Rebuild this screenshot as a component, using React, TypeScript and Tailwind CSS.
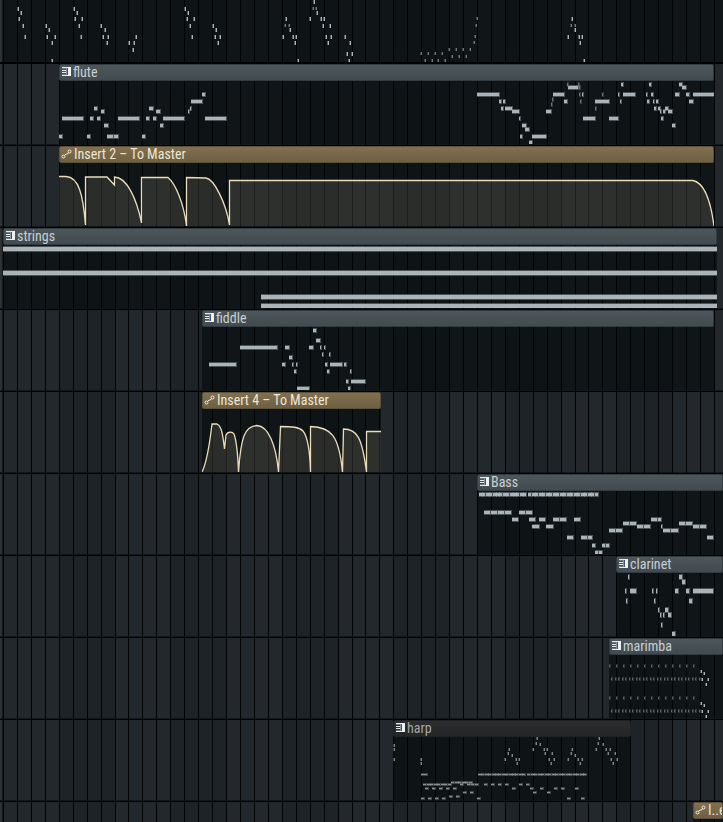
import type { ReactNode } from "react";

type Note = [x: number, y: number, w: number];
type Dot = [x: number, y: number];

// One beat is a bit under 14px, lines snap to whole pixels
const beatX = (i: number) => 3 + Math.round(i * 13.94);
const beats = Array.from({ length: 240 }, (_, i) => i);

const range = (count: number, start: number, step: number) =>
  Array.from({ length: count }, (_, i) => Math.round(start + i * step));

const dots = (points: Dot[]): Note[] => points.map(([x, y]) => [x - 1, y - 2, 2]);

const leadDots: Dot[] = [
  [18, 9], [21, 13], [19, 19], [23, 26], [25, 37],
  [46, 26], [49, 30], [47, 37], [55, 37], [52, 43], [52, 61],
  [74, 9], [77, 13], [75, 19], [82, 19], [79, 26], [81, 37],
  [101, 26], [105, 30], [103, 37], [108, 37], [107, 43],
  [129, 43], [134, 43], [136, 37], [133, 50],
  [185, 9], [188, 13], [187, 19], [194, 19], [190, 26], [192, 37],
  [213, 26], [216, 30], [215, 37], [220, 37], [218, 43],
  [283, 37], [286, 19], [290, 30], [293, 37], [296, 37], [295, 43], [298, 61],
  [310, 19], [314, 2], [317, 13], [321, 19], [324, 19], [323, 26], [330, 26],
  [326, 37], [331, 37], [328, 43],
  [345, 37], [350, 43], [347, 54], [352, 54], [349, 61],
  [568, 37], [572, 19], [575, 30], [579, 37], [582, 37], [580, 43], [584, 61],
];

const leadSoft: Dot[] = [
  [285, 26], [289, 26], [313, 9], [316, 9], [571, 26], [575, 26],
  [421, 54], [425, 61], [428, 54], [432, 61], [435, 54], [438, 61], [442, 54], [445, 61],
  [449, 50], [452, 57], [456, 50], [459, 57], [463, 50], [466, 57], [470, 50],
  [474, 43], [475, 37], [476, 26], [477, 19],
];

const fluteNotes: Note[] = [
  [59, 54, 3], [62, 36, 21], [87, 54, 3], [90, 36, 3], [94, 26, 3], [97, 36, 3],
  [101, 29, 3], [104, 43, 4], [107, 54, 6], [114, 54, 4], [118, 36, 21], [142, 54, 3],
  [146, 36, 3], [149, 26, 4], [153, 36, 3], [156, 29, 4], [160, 43, 3], [163, 36, 21],
  [188, 29, 1], [190, 26, 1], [191, 19, 11], [202, 12, 3], [205, 36, 21],
  [477, 12, 22], [499, 19, 2], [503, 19, 2], [501, 26, 2], [505, 26, 7], [512, 29, 7],
  [519, 36, 1], [522, 43, 4], [525, 47, 4], [520, 54, 2], [532, 54, 14], [529, 60, 3],
  [546, 29, 5], [553, 12, 11], [564, 19, 3], [568, 5, 10], [582, 12, 1], [583, 36, 12],
  [595, 19, 14], [609, 36, 9], [618, 12, 1], [620, 19, 1], [621, 2, 2], [623, 12, 12],
  [646, 12, 1], [647, 19, 2], [649, 2, 2], [651, 12, 2], [653, 19, 1], [656, 19, 2],
  [654, 26, 2], [658, 26, 2], [660, 29, 1], [663, 29, 2], [665, 26, 3], [668, 29, 4],
  [661, 36, 2], [672, 43, 3], [675, 12, 4], [679, 2, 3], [682, 5, 4], [686, 12, 3],
  [689, 19, 4], [693, 12, 21],
];

const fluteSoft: Note[] = [
  [551, 22, 1], [552, 17, 1], [567, 2, 1], [578, 2, 1], [579, 5, 1], [579, 12, 1],
  [580, 19, 1], [595, 26, 1], [602, 12, 1],
];

const stringNotes: Note[] = [
  [3, 2, 714], [3, 26, 714], [261, 50, 456], [261, 59, 456],
];

const fiddleNotes: Note[] = [
  [209, 36, 27], [240, 19, 37], [282, 36, 3], [285, 19, 4], [289, 29, 3], [292, 36, 1],
  [296, 36, 1], [294, 43, 2], [297, 60, 12], [309, 19, 4], [313, 2, 3], [316, 12, 4],
  [320, 19, 1], [324, 19, 1], [322, 26, 1], [329, 26, 1], [325, 36, 2], [327, 43, 2],
  [330, 36, 12], [344, 36, 2], [350, 43, 1], [346, 53, 2], [348, 60, 2], [351, 53, 14],
];

const bassNotes: Note[] = [
  ...range(14, 479, 3.4).map((x): Note => [x, 2, 3]),
  ...range(20, 528, 3.5).map((x): Note => [x, 2, 3]),
  [484, 20, 6], [491, 20, 6], [498, 20, 6], [505, 20, 6], [519, 20, 6], [526, 20, 6],
  [512, 27, 6], [529, 27, 6], [539, 27, 6], [553, 27, 6], [560, 27, 6], [574, 27, 6],
  [532, 34, 7], [546, 34, 7], [567, 45, 6], [581, 45, 6], [588, 45, 4], [592, 53, 3],
  [602, 53, 3], [606, 53, 3], [595, 60, 3], [599, 60, 3], [609, 38, 6], [616, 38, 6],
  [623, 31, 6], [630, 31, 6], [637, 34, 6], [644, 34, 6], [651, 27, 6], [658, 27, 3],
  [661, 34, 1], [663, 38, 7], [671, 38, 7], [679, 31, 6], [686, 31, 6], [693, 34, 6],
  [700, 34, 6], [707, 45, 6],
];

const clarinetNotes: Note[] = [
  [628, 2, 1], [625, 16, 1], [626, 26, 1], [630, 16, 6], [652, 16, 1], [656, 16, 1],
  [654, 26, 1], [658, 35, 1], [660, 40, 1], [661, 50, 1], [663, 40, 1], [665, 35, 3],
  [668, 40, 3], [672, 59, 3], [675, 16, 3], [679, 2, 3], [682, 7, 3], [686, 16, 3],
  [689, 26, 3], [693, 16, 20],
];

const marimbaSoft: Note[] = [11, 43].flatMap((y) => [
  ...range(13, 609, 7).map((x): Note => [x, y - 1, 1]),
  ...range(26, 611, 3.5).map((x): Note => [x, y + 12, 1]),
]);

const marimbaDots: Dot[] = [0, 32].flatMap((dy): Dot[] => [
  [701, 17 + dy], [704, 19 + dy], [702, 25 + dy], [708, 25 + dy], [706, 30 + dy],
]);

const harpDots: Dot[] = [
  [394, 9], [394, 13], [394, 23], [421, 23], [421, 27],
  [505, 23], [509, 13], [508, 17], [512, 19], [516, 23], [519, 23], [517, 27],
  [533, 13], [537, 2], [536, 7], [540, 8], [544, 13], [547, 13], [545, 17], [552, 17],
  [549, 23], [554, 23], [551, 27],
  [568, 23], [572, 13], [571, 17], [575, 19], [578, 23], [582, 23], [580, 27],
  [596, 13], [599, 2], [598, 7], [603, 8], [606, 13], [610, 13], [608, 17], [615, 17],
  [611, 23], [617, 23], [613, 27],
];

const harpNotes: Note[] = [
  [421, 37, 6],
  ...range(14, 478, 3.4).map((x): Note => [x, 37, 3]),
  ...range(17, 527, 3.5).map((x): Note => [x, 37, 3]),
  ...range(8, 423, 3.5).map((x): Note => [x, 47, 3]),
  ...range(6, 451, 3.5).map((x): Note => [x, 45, 3]),
  ...[460, 467, 471, 475, 484, 491, 498, 505, 519, 526].map((x): Note => [x, 47, 3]),
  ...[425, 432, 439, 446, 453, 512, 530, 540, 554, 561, 575].map((x): Note => [x, 51, 3]),
  ...[463, 470, 533, 547].map((x): Note => [x, 55, 3]),
  ...[449, 456].map((x): Note => [x, 59, 3]),
  ...[421, 428, 435, 442, 477, 567, 581].map((x): Note => [x, 61, 3]),
];

function Grid() {
  return (
    <svg className="absolute inset-0 h-full w-full" aria-hidden="true">
      {beats.map((i) => (
        <rect
          key={i}
          x={beatX(i)}
          width="14"
          height="100%"
          fill={Math.floor(i / 4) % 2 ? "#1d2326" : "#23282c"}
        />
      ))}
      {beats.map((i) => (
        <rect key={i} x={beatX(i)} width="1" height="100%" fill="#000203" />
      ))}
      <rect x="2" width="1" height="100%" fill="#15191b" />
    </svg>
  );
}

function Notes({ notes, h = 3, color = "#abb4b8" }: { notes: Note[]; h?: number; color?: string }) {
  return (
    <g fill={color}>
      {notes.map(([x, y, w], i) => (
        <g key={i}>
          <rect x={x} y={y - 1} width={w + 1} height={h + 2} opacity="0.4" />
          <rect x={x} y={y} width={w} height={h} />
        </g>
      ))}
    </g>
  );
}

function Dots({ points, h = 4, color = "#abb4b8" }: { points: Dot[]; h?: number; color?: string }) {
  return (
    <g fill={color}>
      {dots(points).map(([x, y], i) => (
        <g key={i}>
          <rect x={x} y={y} width="2" height={h} opacity="0.45" />
          <rect x={x + 1} y={y} width="1" height={h} />
        </g>
      ))}
    </g>
  );
}

function Curve({ line, end, start }: { line: string; end: number; start: number }) {
  return (
    <g>
      <path d={`${line} L${end},63 L${start},63 Z`} fill="#ffedc4" fillOpacity="0.12" />
      <path d={line} fill="none" stroke="#ebddb9" strokeWidth="1.3" />
    </g>
  );
}

function PianoIcon() {
  return (
    <svg width="9" height="10" className="shrink-0" aria-hidden="true" shapeRendering="crispEdges">
      <path d="M0 0h5v1H0zM0 3h5v1H0zM0 5h5v1H0zM0 8h5v1H0z" fill="#e4eaec" />
      <path d="M0 1h4v1H0zM0 7h4v1H0z" fill="#6f787f" />
      <path d="M4 1h1v7H4z" fill="#8793a3" />
      <path d="M5 0h4v9H5z" fill="#eef1ee" />
      <path d="M5 1h1v7H5z" fill="#46526b" />
    </svg>
  );
}

function AutomationIcon() {
  return (
    <svg width="11" height="10" className="-ml-px shrink-0" fill="none" stroke="#f8efd8" aria-hidden="true">
      <circle cx="2.500" cy="7.500" r="1.500" />
      <circle cx="8.500" cy="2.500" r="1.500" />
      <path d="M3.500 6.500 5 5H6.500L7.500 3.500" />
    </svg>
  );
}

const headerTone = {
  pattern: "border-[#323b40] bg-linear-to-b from-[#4c565b] to-[#424b50] text-[#c9d0d2]",
  automation: "border-[#5e5139] bg-linear-to-b from-[#80704f] to-[#6f6044] text-[#eee6d2]",
  muted: "border-[#202223] bg-linear-to-b from-[#2b2d2e] to-[#242627] text-[#a5a6a4]",
};

type ClipProps = {
  name: string;
  start: number;
  tone?: keyof typeof headerTone;
  className: string;
  children?: ReactNode;
};

function Clip({ name, start, tone = "pattern", className, children }: ClipProps) {
  return (
    <section className={`flex flex-col overflow-hidden ${className}`}>
      <header
        className={`flex h-[17px] shrink-0 items-center overflow-hidden rounded-xs border pb-px pl-0.5 ${headerTone[tone]}`}
      >
        {tone === "automation" ? <AutomationIcon /> : <PianoIcon />}
        <h2 className="ml-0.5 whitespace-nowrap text-[14px] leading-4">{name}</h2>
      </header>
      <div className="h-[63px] bg-[#020709]/55">
        <svg className="h-full w-full" aria-hidden="true">
          <g transform={`translate(${-start} 0)`}>{children}</g>
        </svg>
      </div>
    </section>
  );
}

function Track({ children }: { children?: ReactNode }) {
  return (
    <div className="relative flex h-[82px] overflow-hidden border-b border-black after:absolute after:inset-x-0 after:bottom-0 after:h-px after:bg-black/40">
      {children}
    </div>
  );
}

const insert2 =
  "M59,13.500 H66 C79,14 83,32 85.500,62 V14 H107 L114.500,22 V14 C127,14 137,37 141.500,60 V14.500 H168 C176,21 184,42 186.500,63 V14.500 L206,15 C214,16 226,40 229.500,62 V17.500 H693 C705,20 711,40 714,63";

const insert4 =
  "M202,63 C206,55 210,32 212,15 H217 C222,17 223,28 224.500,40 L226,26 C227,23 232,22 234,25 C237,33 238,50 238.500,63 C241,27 245,17 257,16.500 C268,17 276,35 278.500,63 L280.500,17.500 C292,17.500 299,18 303,22 C308,28 310,45 310.500,63 V17.500 C331,18 339,26 342.500,63 L343.500,20 C357,20 362,28 366.500,63 V22.500 H381";

export default function App() {
  return (
    <main className="relative min-h-screen overflow-hidden bg-[#2c3233] font-['Roboto_Condensed',Roboto,sans-serif]">
      <Grid />
      <div className="relative">
        <div className="flex h-16 border-b-2 border-black pl-[3px]">
          <svg className="h-full w-full bg-[#020709]/55" aria-hidden="true">
            <g transform="translate(-3 0)">
              <Dots points={leadDots} />
              <Dots points={leadSoft} h={3} color="#70787b" />
            </g>
          </svg>
        </div>
        <Track>
          <Clip name="flute" start={59} className="ml-[59px] w-[655px]">
            <Notes notes={fluteNotes} />
            <Notes notes={fluteSoft} color="#6d7578" />
          </Clip>
        </Track>
        <Track>
          <Clip name="Insert 2 – To Master" start={59} tone="automation" className="ml-[59px] w-[655px]">
            <Curve line={insert2} start={59} end={714} />
          </Clip>
        </Track>
        <Track>
          <Clip name="strings" start={3} className="ml-[3px] w-[714px]">
            <Notes notes={stringNotes} h={4} />
          </Clip>
        </Track>
        <Track>
          <Clip name="fiddle" start={202} className="ml-[202px] w-[512px]">
            <Notes notes={fiddleNotes} />
          </Clip>
        </Track>
        <Track>
          <Clip name="Insert 4 – To Master" start={202} tone="automation" className="ml-[202px] w-[179px]">
            <Curve line={insert4} start={202} end={381} />
          </Clip>
        </Track>
        <Track>
          <Clip name="Bass" start={477} className="ml-[477px] grow">
            <Notes notes={bassNotes} />
          </Clip>
        </Track>
        <Track>
          <Clip name="clarinet" start={616} className="ml-[616px] grow">
            <Notes notes={clarinetNotes} h={4} />
          </Clip>
        </Track>
        <Track>
          <Clip name="marimba" start={609} className="ml-[609px] grow">
            <Notes notes={marimbaSoft} h={2} color="#5d6466" />
            <Dots points={marimbaDots} h={3} />
          </Clip>
        </Track>
        <Track>
          <Clip name="harp" start={393} tone="muted" className="ml-[393px] w-[238px]">
            <Dots points={harpDots} h={3} color="#808482" />
            <Notes notes={harpNotes} h={1} color="#8b8f8d" />
          </Clip>
        </Track>
        <div className="flex h-5 overflow-hidden">
          <Clip name="I..e" start={693} tone="automation" className="ml-[693px] grow" />
        </div>
      </div>
    </main>
  );
}
